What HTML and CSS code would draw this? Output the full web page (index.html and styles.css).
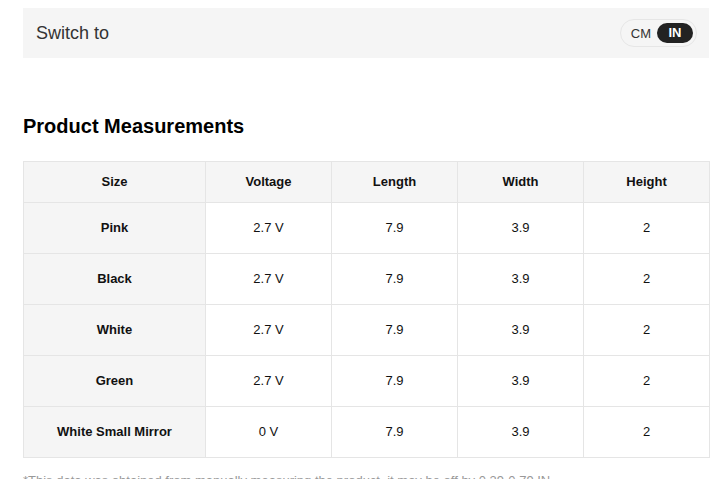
FILE: index.html
```html
<!DOCTYPE html>
<html lang="en">
<head>
<meta charset="utf-8">
<title>Product Measurements</title>
<link rel="stylesheet" href="styles.css">
</head>
<body>
<div class="wrap">
  <div class="switch-bar">
    <span class="switch-label">Switch to</span>
    <div class="toggle">
      <span class="opt">CM</span>
      <span class="opt active">IN</span>
    </div>
  </div>

  <h2 class="title">Product Measurements</h2>

  <table class="measure">
    <colgroup>
      <col class="c-first">
      <col class="c-rest">
      <col class="c-rest">
      <col class="c-rest">
      <col class="c-rest">
    </colgroup>
    <thead>
      <tr><th>Size</th><th>Voltage</th><th>Length</th><th>Width</th><th>Height</th></tr>
    </thead>
    <tbody>
      <tr><th>Pink</th><td>2.7 V</td><td>7.9</td><td>3.9</td><td>2</td></tr>
      <tr><th>Black</th><td>2.7 V</td><td>7.9</td><td>3.9</td><td>2</td></tr>
      <tr><th>White</th><td>2.7 V</td><td>7.9</td><td>3.9</td><td>2</td></tr>
      <tr><th>Green</th><td>2.7 V</td><td>7.9</td><td>3.9</td><td>2</td></tr>
      <tr><th>White Small Mirror</th><td>0 V</td><td>7.9</td><td>3.9</td><td>2</td></tr>
    </tbody>
  </table>

  <p class="note">*This data was obtained from manually measuring the product, it may be off by 0.39-0.79 IN.</p>
</div>
</body>
</html>
```

FILE: styles.css
```css
html, body {
  margin: 0;
  padding: 0;
  background: #fff;
}
body {
  font-family: "Liberation Sans", Arial, sans-serif;
  color: #222;
}
.wrap {
  margin: 8px 19px 0 23px;
}
.switch-bar {
  height: 50px;
  background: #f5f5f5;
  display: flex;
  align-items: center;
  justify-content: space-between;
  padding: 0 12px 0 13px;
  box-sizing: border-box;
}
.switch-label {
  font-size: 18px;
  color: #333;
}
.toggle {
  display: flex;
  align-items: center;
  height: 28px;
  box-sizing: border-box;
  border: 1px solid #e6e6e6;
  border-radius: 14px;
  padding: 0 3px 0 0;
}
.opt {
  font-size: 13px;
  color: #333;
  padding: 0 6px 0 10px;
}
.opt.active {
  background: #222;
  color: #fff;
  font-weight: bold;
  width: 36px;
  height: 20px;
  line-height: 20px;
  border-radius: 10px;
  padding: 0;
  text-align: center;
}
.title {
  margin: 56px 0 23px;
  font-size: 20px;
  line-height: 24px;
  font-weight: bold;
  color: #000;
}
.measure {
  width: 686px;
  border-collapse: collapse;
  table-layout: fixed;
  font-size: 13px;
}
.c-first { width: 182px; }
.c-rest { width: 126px; }
.measure th,
.measure td {
  border: 1px solid #e5e5e5;
  text-align: center;
  vertical-align: middle;
  padding: 0 0 2px;
  height: 48px;
  color: #111;
}
.measure thead th {
  height: 38px;
  background: #f5f5f5;
  font-weight: bold;
}
.measure tbody th {
  background: #f5f5f5;
  font-weight: bold;
}
.note {
  margin: 14px 0 0;
  font-size: 13px;
  line-height: 18px;
  color: #999;
}
```
